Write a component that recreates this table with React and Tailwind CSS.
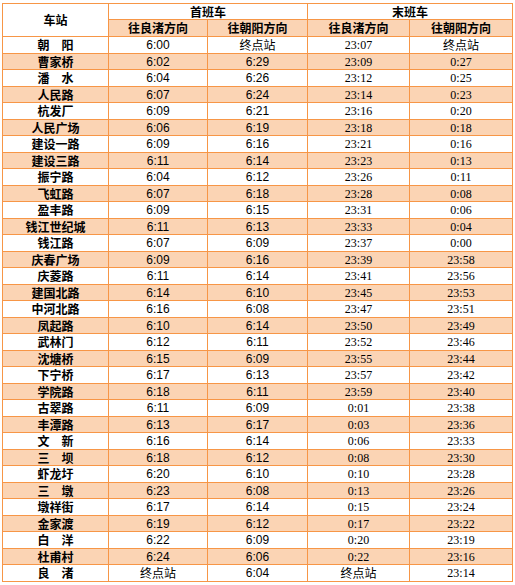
import React from "react";

const rows = [
  ["朝\u3000阳", "6:00", "终点站", "23:07", "终点站"],
  ["曹家桥", "6:02", "6:29", "23:09", "0:27"],
  ["潘\u3000水", "6:04", "6:26", "23:12", "0:25"],
  ["人民路", "6:07", "6:24", "23:14", "0:23"],
  ["杭发厂", "6:09", "6:21", "23:16", "0:20"],
  ["人民广场", "6:06", "6:19", "23:18", "0:18"],
  ["建设一路", "6:09", "6:16", "23:21", "0:16"],
  ["建设三路", "6:11", "6:14", "23:23", "0:13"],
  ["振宁路", "6:04", "6:12", "23:26", "0:11"],
  ["飞虹路", "6:07", "6:18", "23:28", "0:08"],
  ["盈丰路", "6:09", "6:15", "23:31", "0:06"],
  ["钱江世纪城", "6:11", "6:13", "23:33", "0:04"],
  ["钱江路", "6:07", "6:09", "23:37", "0:00"],
  ["庆春广场", "6:09", "6:16", "23:39", "23:58"],
  ["庆菱路", "6:11", "6:14", "23:41", "23:56"],
  ["建国北路", "6:14", "6:10", "23:45", "23:53"],
  ["中河北路", "6:16", "6:08", "23:47", "23:51"],
  ["凤起路", "6:10", "6:14", "23:50", "23:49"],
  ["武林门", "6:12", "6:11", "23:52", "23:46"],
  ["沈塘桥", "6:15", "6:09", "23:55", "23:44"],
  ["下宁桥", "6:17", "6:13", "23:57", "23:42"],
  ["学院路", "6:18", "6:11", "23:59", "23:40"],
  ["古翠路", "6:11", "6:09", "0:01", "23:38"],
  ["丰潭路", "6:13", "6:17", "0:03", "23:36"],
  ["文\u3000新", "6:16", "6:14", "0:06", "23:33"],
  ["三\u3000坝", "6:18", "6:12", "0:08", "23:30"],
  ["虾龙圩", "6:20", "6:10", "0:10", "23:28"],
  ["三\u3000墩", "6:23", "6:08", "0:13", "23:26"],
  ["墩祥街", "6:17", "6:14", "0:15", "23:24"],
  ["金家渡", "6:19", "6:12", "0:17", "23:22"],
  ["白\u3000洋", "6:22", "6:09", "0:20", "23:19"],
  ["杜甫村", "6:24", "6:06", "0:22", "23:16"],
  ["良\u3000渚", "终点站", "6:04", "终点站", "23:14"],
];

const cjk = "font-['Noto_Sans_CJK_SC',sans-serif]";
const sansNum = "font-['Liberation_Sans','Noto_Sans_CJK_SC',sans-serif]";
const serifNum = "font-['Liberation_Serif','Noto_Sans_CJK_SC',serif]";

export default function App() {
  return (
    <div className="w-[515px] h-[585px] bg-white pt-[3px] pl-[2px]">
      <div className="grid grid-cols-[106px_99px_100px_102px_103px] w-[511px] border-l border-t border-[#f79646] text-[12px] leading-none text-black">
        <div className={`row-span-2 flex items-center justify-center border-r border-b border-[#f79646] bg-white font-bold ${cjk}`}>
          车站
        </div>
        <div className={`col-span-2 h-[16px] flex items-center justify-center border-r border-b border-[#f79646] bg-white font-bold ${cjk}`}>
          首班车
        </div>
        <div className={`col-span-2 h-[16px] flex items-center justify-center border-r border-b border-[#f79646] bg-white font-bold ${cjk}`}>
          末班车
        </div>
        {["往良渚方向", "往朝阳方向", "往良渚方向", "往朝阳方向"].map((t, i) => (
          <div
            key={i}
            className={`h-[17px] flex items-center justify-center border-r border-b border-[#f79646] bg-[#fbd4b4] font-bold ${cjk}`}
          >
            {t}
          </div>
        ))}
        {rows.map((r, ri) => {
          const fill = ri % 2 === 1 ? "bg-[#fbd4b4]" : "bg-white";
          const h = ri % 2 === 0 ? "h-[17px]" : "h-[16px]";
          return r.map((c, ci) => {
            const isCjk = /[^\d:]/.test(c);
            const font =
              ci === 0
                ? `font-bold ${cjk}`
                : isCjk
                ? cjk
                : ci <= 2
                ? sansNum
                : serifNum;
            return (
              <div
                key={ri + "-" + ci}
                className={`${h} ${fill} flex items-center justify-center border-r border-b border-[#f79646] whitespace-pre ${font}`}
              >
                {c}
              </div>
            );
          });
        })}
      </div>
    </div>
  );
}
